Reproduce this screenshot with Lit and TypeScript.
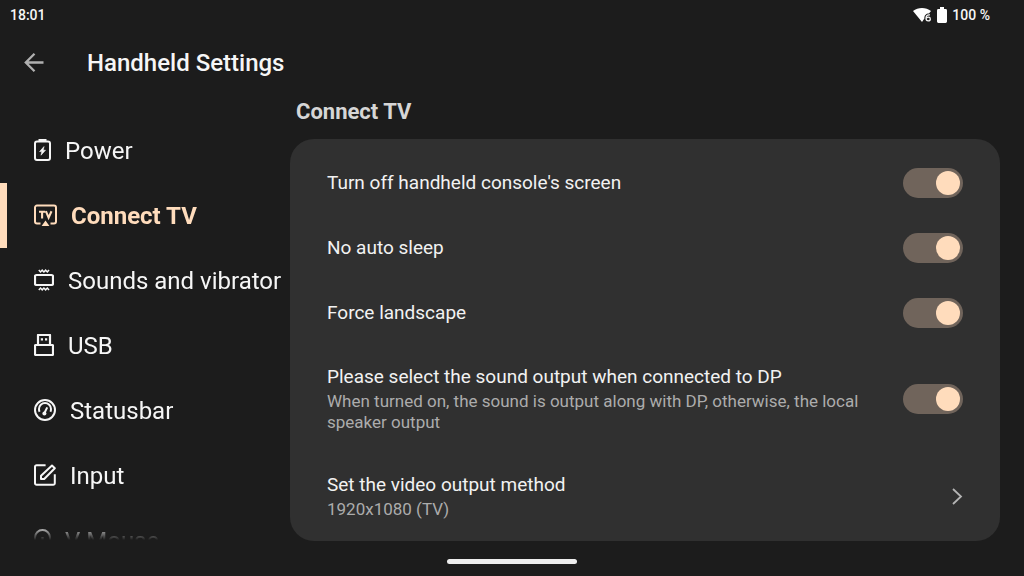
import { LitElement, html, css, svg, nothing } from "lit";
import { customElement, property, state } from "lit/decorators.js";

type Section = { id: string; label: string; width: number; icon: unknown };

const sections: Section[] = [
  {
    id: "power",
    label: "Power",
    width: 17,
    icon: svg`<rect x="1" y="2.500" width="15" height="18.500" rx="2"/><path d="M4.500 1.200h8" stroke-width="2.400"/><path d="M10 7.600 5.600 12.600h2.200l-.8 3.600 4.500-5h-2.300z" fill="currentColor" stroke="currentColor" stroke-width=".6"/>`,
  },
  {
    id: "tv",
    label: "Connect TV",
    width: 23,
    icon: svg`<path d="M6.500 19.500H3a2 2 0 0 1-2-2V3.500a2 2 0 0 1 2-2h17a2 2 0 0 1 2 2v14a2 2 0 0 1-2 2h-3.500"/><path d="M5 7.800h6.200M8.100 7.800v6.800M11.900 7.200l2.700 6.400 2.900-6.400" stroke-width="2.100"/><path d="M11.500 16.400 15.400 22H7.600z" fill="currentColor" stroke="none"/>`,
  },
  {
    id: "sound",
    label: "Sounds and vibrator",
    width: 20,
    icon: svg`<rect x="1" y="6" width="18" height="10" rx="1.400" stroke-width="2.200"/><path d="m4.800 1 1.700 2 1.700-1.800L9.900 3l1.700-1.800L13.300 3 15 1M4.800 21l1.700-2 1.700 1.800L9.900 19l1.700 1.800 1.700-1.800 1.700 2" stroke-width="1.500"/>`,
  },
  {
    id: "usb",
    label: "USB",
    width: 20,
    icon: svg`<rect x="1" y="11" width="18" height="10" rx=".6" stroke-width="2.200"/><path d="M4 11V1h12v10" stroke-width="2.200" stroke-linejoin="round"/><path d="M6.800 4.300h2.200v2.200H6.800zM11 4.300h2.200v2.200H11z" fill="currentColor" stroke="none"/>`,
  },
  {
    id: "statusbar",
    label: "Statusbar",
    width: 22,
    icon: svg`<circle cx="11" cy="11" r="10"/><path d="M5.600 12.800A6 6 0 0 1 5 10a6 6 0 0 1 12 0 6 6 0 0 1-.6 2.800"/><path d="m13.200 8.400-2.600 5.400" stroke-width="2"/><circle cx="10.400" cy="14.600" r="2" fill="currentColor" stroke="none"/>`,
  },
  {
    id: "input",
    label: "Input",
    width: 22,
    icon: svg`<path d="M11.600 1.200H2.600A1.600 1.600 0 0 0 1 2.800v16.400a1.600 1.600 0 0 0 1.600 1.600h16.600a1.600 1.600 0 0 0 1.600-1.600v-9"/><path d="M18 1.500 20.800 4.200 10.200 15H7v-3.200z" stroke-linejoin="round"/>`,
  },
  {
    id: "mouse",
    label: "V Mouse",
    width: 17,
    icon: svg`<rect x="1" y="1" width="15" height="20" rx="7.500"/><path d="M8.500 8v4" stroke-width="2.400"/>`,
  },
];

@customElement("setting-row")
class SettingRow extends LitElement {
  @property() heading = "";
  @property() detail = "";
  @property({ type: Boolean }) on = false;
  @property({ type: Boolean }) link = false;

  static styles = css`
    :host { display: block; }
    .row {
      display: flex;
      align-items: center;
      justify-content: space-between;
      gap: 32px;
      box-sizing: border-box;
      width: 100%;
      min-height: 65px;
      padding: 20px 37px;
      border: 0;
      background: none;
      color: #f2f2f2;
      font: 19px/24px Roboto, sans-serif;
      text-align: left;
      cursor: pointer;
    }
    .text { display: block; flex: 1; min-width: 0; max-width: 544px; }
    .title { display: block; }
    .detail {
      display: block;
      color: #acacac;
      font-size: 17px;
      line-height: 21px;
      padding-top: 2px;
    }
    .switch {
      appearance: none;
      flex: none;
      display: flex;
      align-items: center;
      box-sizing: border-box;
      width: 60px;
      height: 30px;
      margin: -3px 0;
      padding: 3px;
      border-radius: 15px;
      background: #555;
      cursor: pointer;
    }
    .switch::before {
      content: "";
      width: 24px;
      height: 24px;
      border-radius: 50%;
      background: #aaa;
    }
    .switch:checked { justify-content: flex-end; background: #70645b; }
    .switch:checked::before { background: #ffdcbc; }
    .chevron { flex: none; display: block; }
  `;

  private toggle(e: Event) {
    this.on = (e.target as HTMLInputElement).checked;
  }

  render() {
    const text = html`<span class="text">
      <span class="title">${this.heading}</span>
      ${this.detail ? html`<span class="detail">${this.detail}</span>` : nothing}
    </span>`;
    if (this.link) {
      return html`<button class="row">${text}
        <svg class="chevron" width="12" height="18" viewBox="0 0 12 18" fill="none" stroke="#b4b4b4" stroke-width="1.8" aria-hidden="true"><path d="m2 1 8 7.500-8 7.500"/></svg>
      </button>`;
    }
    return html`<label class="row">${text}
      <input class="switch" type="checkbox" role="switch" .checked=${this.on} @change=${this.toggle}>
    </label>`;
  }
}

@customElement("app-root")
class AppRoot extends LitElement {
  @state() private current = "tv";

  static styles = css`
    :host {
      display: flex;
      flex-direction: column;
      height: 100vh;
      overflow: hidden;
      background: #1c1c1c;
      color: #f6f6f6;
      font-family: Roboto, sans-serif;
    }
    .status {
      display: flex;
      align-items: center;
      justify-content: space-between;
      box-sizing: border-box;
      height: 28px;
      padding: 2px 34px 0 10px;
      font-size: 14px;
      font-weight: 500;
    }
    .indicators { display: flex; align-items: center; gap: 5px; }
    .header {
      display: flex;
      align-items: center;
      gap: 42px;
      height: 70px;
      padding: 0 23px;
    }
    .back {
      display: flex;
      padding: 0;
      border: 0;
      background: none;
      color: #b0b0b0;
      cursor: pointer;
    }
    .page-title { margin: 0; font-size: 24px; line-height: 28px; font-weight: 500; }
    .body { display: flex; flex: 1; min-height: 0; }
    .sections {
      flex: none;
      width: 290px;
      margin-top: 20px;
      overflow: hidden;
      mask-image: linear-gradient(#000 calc(100% - 16px), transparent);
    }
    .section {
      display: flex;
      align-items: center;
      gap: 14px;
      box-sizing: border-box;
      width: 100%;
      height: 65px;
      padding: 0 0 0 27px;
      border: 0;
      border-left: 7px solid transparent;
      background: none;
      color: inherit;
      font: 24px/28px Roboto, sans-serif;
      white-space: nowrap;
      cursor: pointer;
    }
    .section[aria-current="page"] {
      border-color: #ffdcbc;
      color: #ffdcbc;
      font-weight: 700;
    }
    .icon { flex: none; margin-bottom: 2px; }
    .panel { flex: 1; min-width: 0; padding-right: 24px; }
    .panel-title {
      margin: 0;
      padding: 0 6px 13px;
      color: #d6d6d6;
      font-size: 22px;
      line-height: 28px;
      font-weight: 700;
    }
    .card { padding: 11px 0 1px; border-radius: 24px; background: #303030; }
    .gesture {
      display: flex;
      justify-content: center;
      align-items: center;
      box-sizing: border-box;
      height: 36px;
      padding-top: 7px;
    }
    .pill { width: 130px; height: 5px; border-radius: 3px; background: #ededed; }
  `;

  render() {
    return html`
      <div class="status">
        <span>18:01</span>
        <span class="indicators">
          <svg width="19" height="16" viewBox="0 0 19 16" fill="#fff" aria-hidden="true">
            <path d="M0 4C5 0 13 0 18 4l-2 2.600c-3 0-4.800 2-4.600 5L9 15z"/>
            <path d="M17 7.900c-3-.4-4 1.200-4 3.400 0 1.600.8 2.600 2.200 2.600s2.100-.8 2.100-2c0-1.100-.7-1.700-1.800-1.700-.9 0-1.700.4-2.300 1" fill="none" stroke="#f4f4f4" stroke-width="1.3"/>
          </svg>
          <svg width="10" height="16" viewBox="0 0 10 16" fill="#fff" aria-hidden="true"><path d="M3 0h4v2h1.600A1.400 1.400 0 0 1 10 3.400v11.200A1.400 1.400 0 0 1 8.600 16H1.400A1.400 1.400 0 0 1 0 14.600V3.400A1.400 1.400 0 0 1 1.400 2H3z"/></svg>
          <span>100 %</span>
        </span>
      </div>
      <header class="header">
        <button class="back" aria-label="Back">
          <svg width="22" height="22" viewBox="0 0 22 22" fill="none" stroke="currentColor" stroke-width="2.300"><path d="M20.500 10.500H2.800M11.500 1.800 2.800 10.500l8.700 8.700"/></svg>
        </button>
        <h1 class="page-title">Handheld Settings</h1>
      </header>
      <main class="body">
        <nav class="sections">
          ${sections.map(
            (s) => html`<button class="section" aria-current=${this.current === s.id ? "page" : nothing} @click=${() => (this.current = s.id)}>
              <svg class="icon" width=${s.width} height="22" viewBox="0 0 ${s.width} 22" fill="none" stroke="currentColor" stroke-width="2" aria-hidden="true">${s.icon}</svg>
              <span>${s.label}</span>
            </button>`
          )}
        </nav>
        <section class="panel">
          <h2 class="panel-title">Connect TV</h2>
          <div class="card">
            <setting-row heading="Turn off handheld console's screen" on></setting-row>
            <setting-row heading="No auto sleep" on></setting-row>
            <setting-row heading="Force landscape" on></setting-row>
            <setting-row heading="Please select the sound output when connected to DP" detail="When turned on, the sound is output along with DP, otherwise, the local speaker output" on></setting-row>
            <setting-row heading="Set the video output method" detail="1920x1080 (TV)" link></setting-row>
          </div>
        </section>
      </main>
      <footer class="gesture"><div class="pill"></div></footer>
    `;
  }
}
